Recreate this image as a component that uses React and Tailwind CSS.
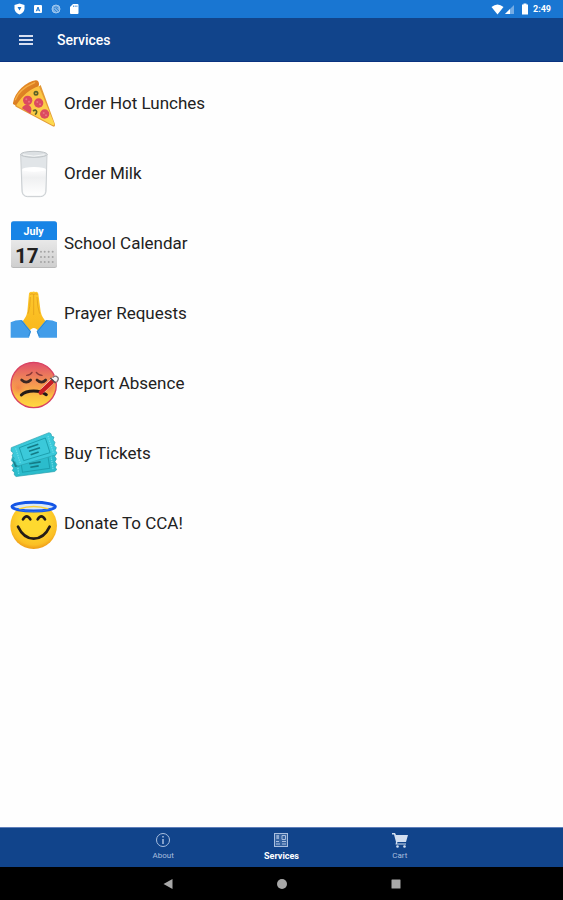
import React, { useState } from "react";

const iconClass = "w-12 h-12 shrink-0 overflow-visible";

function PizzaIcon() {
  return (
    <svg viewBox="30 30 144 144" className={iconClass} aria-hidden="true">
      <defs>
        <linearGradient id="crust" x1="0" y1="0" x2="1" y2="1">
          <stop offset="0" stopColor="#f09a2c" />
          <stop offset="1" stopColor="#c9641a" />
        </linearGradient>
        <linearGradient id="cheese" x1="0" y1="0" x2="1" y2="1">
          <stop offset="0" stopColor="#fbb73a" />
          <stop offset="1" stopColor="#fddc50" />
        </linearGradient>
      </defs>
      <path d="M46 103 Q43 109 49 111 L158 169 Q166 173 165 163 L122 45 Z" fill="#e49a35" />
      <path d="M50 98 Q77 56 115 45 L163 161 Q164 168 157 165 L50 107 Z" fill="url(#cheese)" />
      <path d="M39 99 Q43 74 64 54 Q88 33 107 31 Q118 31 117 45 Q115 51 107 52 Q76 66 55 96 Q50 107 43 104 Q37 103 39 99 Z" fill="url(#crust)" />
      <path d="M46 89 Q58 57 104 38" fill="none" stroke="#f6ae45" strokeWidth="4" strokeLinecap="round" />
      <g fill="#dc4a5f">
        <circle cx="83" cy="91" r="14" />
        <circle cx="116" cy="99" r="14" />
        <circle cx="134" cy="132" r="14" />
        <path d="M66 115 A14 14 0 0 1 94 122 Q93 128 91 131 Z" />
      </g>
      <g fill="#e87582">
        <circle cx="79" cy="88" r="3" />
        <circle cx="87" cy="95" r="3" />
        <circle cx="112" cy="96" r="3" />
        <circle cx="120" cy="103" r="3" />
        <circle cx="131" cy="129" r="3" />
        <circle cx="138" cy="136" r="3" />
      </g>
      <g fill="none" stroke="#596127" strokeWidth="5">
        <circle cx="108" cy="70" r="5" />
        <path d="M99 123 Q108 117 110 125 Q110 130 105 134" />
      </g>
    </svg>
  );
}

function MilkIcon() {
  return (
    <svg viewBox="30 30 144 144" className={iconClass} aria-hidden="true">
      <defs>
        <linearGradient id="milk" x1="0" y1="0" x2="0" y2="1">
          <stop offset="0" stopColor="#ffffff" />
          <stop offset="0.35" stopColor="#eff0f1" />
          <stop offset="1" stopColor="#ffffff" />
        </linearGradient>
      </defs>
      <path d="M62 43 L66 155 Q68 169 82 170 H121 Q136 169 138 155 L141 43 Z" fill="#e1e5e8" stroke="#cbcfd2" strokeWidth="3" />
      <path d="M66 89 Q101 78 138 89 L135 155 Q133 166 121 167 H82 Q71 166 69 155 Z" fill="url(#milk)" />
      <ellipse cx="102" cy="88" rx="36" ry="7" fill="#fff" />
      <ellipse cx="102" cy="43" rx="40" ry="9" fill="#dce0e3" stroke="#bec3c6" strokeWidth="3" />
      <path d="M69 44 Q101 53 134 44" fill="none" stroke="#f5f7f7" strokeWidth="3" />
    </svg>
  );
}

function CalendarIcon() {
  return (
    <svg viewBox="30 30 144 144" className={iconClass} aria-hidden="true">
      <defs>
        <linearGradient id="paper" x1="0" y1="0" x2="0" y2="1">
          <stop offset="0" stopColor="#fafafa" />
          <stop offset="1" stopColor="#cfcfcf" />
        </linearGradient>
      </defs>
      <rect x="33" y="34" width="138" height="140" rx="7" fill="#b9b9b9" />
      <rect x="33" y="34" width="138" height="137" rx="7" fill="url(#paper)" />
      <path d="M33 90 V42 Q33 34 41 34 H163 Q171 34 171 42 V90 Z" fill="#1784e6" />
      <text x="101" y="75" textAnchor="middle" fontFamily="Roboto, sans-serif" fontSize="32" fontWeight="700" fill="#fff">July</text>
      <text x="45" y="159" fontFamily="Roboto, sans-serif" fontSize="62" fontWeight="700" fill="#202020">17</text>
      <g fill="#a4a4a4">
        {[125, 141, 156].map((y) =>
          [123, 134, 146, 158].map((x) => <circle key={`${x}-${y}`} cx={x} cy={y} r="3" />)
        )}
      </g>
    </svg>
  );
}

function PrayIcon() {
  return (
    <svg viewBox="30 30 144 144" className={iconClass} aria-hidden="true">
      <defs>
        <linearGradient id="hands" x1="0" y1="0" x2="0" y2="1">
          <stop offset="0" stopColor="#fdc72d" />
          <stop offset="1" stopColor="#f9b81b" />
        </linearGradient>
      </defs>
      <path d="M66 125 Q79 112 82 95 L87 40 Q90 34 96 36 Q101 33 106 36 Q113 34 115 41 L122 95 Q126 113 139 125 L121 157 L108 146 Q101 141 94 147 L81 157 Z" fill="url(#hands)" />
      <path d="M101 42 V105 M91 51 Q91 82 84 101 M111 51 Q112 82 119 101" fill="none" stroke="#e8a61c" strokeWidth="3" />
      <path d="M90 43 Q96 40 101 43 Q107 40 113 43" fill="none" stroke="#e8a21a" strokeWidth="3" />
      <path d="M32 127 Q48 119 66 120 L93 154 L87 173 H32 Z M171 127 Q156 119 138 120 L110 154 L117 173 H171 Z" fill="#429de9" />
      <path d="M65 123 L91 155 L86 168 M139 123 L112 155 L118 168" fill="none" stroke="#2e87d0" strokeWidth="3" />
    </svg>
  );
}

function SickIcon() {
  return (
    <svg viewBox="30 30 144 144" className={iconClass} aria-hidden="true">
      <defs>
        <linearGradient id="fever" x1="0" y1="0" x2="0" y2="1">
          <stop offset="0" stopColor="#e04e6b" />
          <stop offset="0.5" stopColor="#f59a50" />
          <stop offset="0.75" stopColor="#fcc040" />
          <stop offset="1" stopColor="#ffda40" />
        </linearGradient>
        <radialGradient id="cheek">
          <stop offset="0" stopColor="#ef5b4c" stopOpacity="0.5" />
          <stop offset="1" stopColor="#f5834a" stopOpacity="0" />
        </radialGradient>
      </defs>
      <circle cx="101" cy="105" r="68" fill="url(#fever)" stroke="#d94162" strokeWidth="4" />
      <circle cx="55" cy="114" r="23" fill="url(#cheek)" />
      <circle cx="147" cy="114" r="23" fill="url(#cheek)" />
      <g fill="none" stroke="#3c2822" strokeLinecap="round">
        <path d="M80 76 Q92 75 96 67 M109 67 Q114 75 126 76" stroke="#8b3a37" strokeWidth="4" />
        <path d="M65 90 Q79 103 92 90 M111 90 Q125 103 137 90" strokeWidth="8" />
        <path d="M64 135 Q76 123 101 123 Q124 123 139 134" stroke="#241a17" strokeWidth="9" />
      </g>
      <path d="M130 120 L167 83" stroke="#fff" strokeWidth="15" strokeLinecap="round" />
      <path d="M122 128 L156 95" stroke="#c91e22" strokeWidth="13" strokeLinecap="round" />
      <path d="M151 84 L167 99" stroke="#574e51" strokeWidth="5" />
      <path d="M158 83 Q166 74 173 82 Q178 87 170 96" fill="#f4f4f4" stroke="#796d72" strokeWidth="4" />
    </svg>
  );
}

function Ticket({ fill }) {
  return (
    <g>
      <path
        d="M34 83 L147 38 L153 41 L155 49 L162 51 L159 60 L165 67 L162 76 L169 83 L166 92 L171 99 L166 105 L54 138 L48 134 L47 126 L40 122 L43 114 L36 108 L40 99 L33 93 Z"
        fill={fill}
        stroke="#27a0ae"
        strokeWidth="2"
      />
      <path d="M58 83 L136 54 L150 98 L71 122 Z" fill="none" stroke="#1c9fae" strokeWidth="3" />
      <path d="M47 85 L61 130 M144 48 L160 99" stroke="#69dce8" strokeWidth="4" strokeDasharray="4 3" />
      <path d="M82 84 L115 73 M87 94 L120 83 M92 104 L116 96" stroke="#147b86" strokeWidth="5" />
    </g>
  );
}

function TicketsIcon() {
  return (
    <svg viewBox="30 30 144 144" className={iconClass} aria-hidden="true">
      <g transform="rotate(9 101 105) translate(5 39)">
        <Ticket fill="#2bbccc" />
      </g>
      <path d="M36 116 L49 133 L60 139 L45 141 Z" fill="#187e8a" />
      <Ticket fill="#3bc9da" />
    </svg>
  );
}

function AngelIcon() {
  return (
    <svg viewBox="30 30 144 144" className={iconClass} aria-hidden="true">
      <defs>
        <radialGradient id="face" cx="0.5" cy="0.4" r="0.6">
          <stop offset="0.45" stopColor="#fed92f" />
          <stop offset="0.85" stopColor="#fbbf25" />
          <stop offset="1" stopColor="#ee9b18" />
        </radialGradient>
      </defs>
      <circle cx="101" cy="107" r="70" fill="url(#face)" />
      <ellipse cx="101" cy="50" rx="65" ry="13" fill="#d9e8f8" stroke="#1455e5" strokeWidth="9" />
      <path d="M57 57 Q101 42 145 57" fill="none" stroke="#fbd038" strokeWidth="5" />
      <path d="M47 56 Q101 73 155 56" fill="none" stroke="#2b72f2" strokeWidth="3" />
      <g fill="none" stroke="#241d16" strokeWidth="8" strokeLinecap="round">
        <path d="M69 88 Q80 70 91 88 M113 88 Q124 70 135 88" />
        <path d="M54 110 Q71 146 101 146 Q132 146 149 110" />
      </g>
    </svg>
  );
}

const services = [
  { title: "Order Hot Lunches", Icon: PizzaIcon },
  { title: "Order Milk", Icon: MilkIcon },
  { title: "School Calendar", Icon: CalendarIcon },
  { title: "Prayer Requests", Icon: PrayIcon },
  { title: "Report Absence", Icon: SickIcon },
  { title: "Buy Tickets", Icon: TicketsIcon },
  { title: "Donate To CCA!", Icon: AngelIcon },
];

function InfoIcon() {
  return (
    <svg viewBox="0 0 16 16" className="w-4 h-4" fill="none" stroke="currentColor" aria-hidden="true">
      <circle cx="8" cy="8" r="6.5" />
      <path d="M8 7 V12 M8 4 V5.5" strokeWidth="1.5" />
    </svg>
  );
}

function NewsIcon() {
  return (
    <svg viewBox="0 0 16 16" className="w-4 h-4" fill="none" stroke="currentColor" aria-hidden="true">
      <rect x="1.5" y="1.5" width="13" height="13" fill="currentColor" fillOpacity="0.25" />
      <path d="M3 4 H6 M3 6 H6 M3 9.5 H6 M3 12 H7 M5 3 V7" />
      <path d="M9 3.5 H12.5 V7.5 H9 Z M9 9.5 H13 M9 12 H13" />
    </svg>
  );
}

function CartIcon() {
  return (
    <svg viewBox="0 0 16 16" className="w-4 h-4" fill="currentColor" aria-hidden="true">
      <path d="M0 1 H3 L4 3 H16 L14 10 H5.5 L5 11.5 H14 V12.5 H3.5 L4 10 L2 2.5 H0 Z" />
      <circle cx="5.5" cy="14.5" r="1.3" />
      <circle cx="12.5" cy="14.5" r="1.3" />
    </svg>
  );
}

const tabs = [
  { label: "About", Icon: InfoIcon },
  { label: "Services", Icon: NewsIcon },
  { label: "Cart", Icon: CartIcon },
];

function StatusBar() {
  return (
    <div className="flex h-[18px] items-center justify-between bg-[#1976d2] pl-3.5 pr-3 text-white">
      <div className="flex items-center gap-2">
        <svg viewBox="0 0 11 12" className="h-3 w-[11px]" aria-hidden="true">
          <path d="M5.5 0.5 L10.5 2 V6 Q10 9.5 5.5 11.5 Q1 9.5 0.5 6 V2 Z" fill="currentColor" />
          <path d="M3.5 4 H7.5 L5.5 7.5 Z" fill="#1976d2" />
        </svg>
        <svg viewBox="0 0 10 10" className="h-2.5 w-2.5" aria-hidden="true">
          <rect x="1" y="1" width="8" height="8" rx="1" fill="currentColor" />
          <path d="M3.3 7.3 L5 3 L6.7 7.3 M4 6 H6" fill="none" stroke="#1976d2" />
        </svg>
        <svg viewBox="0 0 10 10" className="h-2.5 w-2.5" aria-hidden="true">
          <circle cx="5" cy="5" r="4" fill="#79b1e8" stroke="#a3c9ee" />
          <path d="M3 4 Q5 1.5 7 4 M3 5 L6 8 M5 4 L8 7" fill="none" stroke="#3b87d2" />
        </svg>
        <svg viewBox="0 0 10 12" className="h-3 w-2.5" aria-hidden="true">
          <path d="M4 1 H8.5 Q9.5 1 9.5 2 V10 Q9.5 11 8.5 11 H2 Q1 11 1 10 V4 Z" fill="currentColor" />
          <path d="M4.5 2.5 V4 M6.2 2.5 V4 M7.9 2.5 V4" stroke="#1976d2" strokeWidth="0.7" />
        </svg>
      </div>
      <div className="flex items-center gap-1">
        <svg viewBox="0 0 13 11" className="h-[11px] w-[13px]" aria-hidden="true">
          <path d="M0.5 3 Q6.5 -2 12.5 3 L6.5 10.5 Z" fill="currentColor" />
        </svg>
        <svg viewBox="0 0 11 11" className="-ml-1 h-[11px] w-[11px]" aria-hidden="true">
          <path d="M10 1 V10 H1 Z" fill="currentColor" fillOpacity="0.4" />
          <path d="M6 5 V10 H1 Z" fill="currentColor" />
        </svg>
        <svg viewBox="0 0 8 12" className="ml-0.5 h-3 w-2" aria-hidden="true">
          <path d="M2.5 0.5 H5.5 V1.5 H7 V11.5 H1 V1.5 H2.5 Z" fill="currentColor" />
        </svg>
        <span className="text-[9px] leading-3 font-bold">2:49</span>
      </div>
    </div>
  );
}

function SystemNav() {
  return (
    <div className="h-[33px] bg-black text-[#a8a8a8]">
      <div className="mx-auto flex h-full max-w-[342px] items-center">
        <button aria-label="Back" className="flex flex-1 justify-center">
          <svg viewBox="0 0 10 10" className="h-2.5 w-2.5" fill="currentColor"><path d="M0.5 5 L9.5 0 V10 Z" /></svg>
        </button>
        <button aria-label="Home" className="flex flex-1 justify-center">
          <svg viewBox="0 0 10 10" className="h-2.5 w-2.5" fill="currentColor"><circle cx="5" cy="5" r="5" /></svg>
        </button>
        <button aria-label="Recent apps" className="flex flex-1 justify-center">
          <svg viewBox="0 0 10 10" className="h-2.5 w-2.5" fill="currentColor"><rect x="0.5" y="0.5" width="9" height="9" rx="0.5" /></svg>
        </button>
      </div>
    </div>
  );
}

export default function App() {
  const [active, setActive] = useState("Services");

  return (
    <div className="flex min-h-screen flex-col bg-[#fefefe] font-[Roboto,sans-serif]">
      <StatusBar />
      <header className="flex h-11 items-center gap-6 border-b border-[#0a3280] bg-[#11448b] pl-[19px] text-white">
        <button aria-label="Open menu">
          <svg viewBox="0 0 14 12" className="h-3 w-3.5" aria-hidden="true">
            <path d="M0 2 H14 M0 6 H14 M0 10 H14" stroke="#d7dff0" strokeWidth="2" />
          </svg>
        </button>
        <h1 className="text-sm font-medium">Services</h1>
      </header>

      <main className="flex-1 pt-[7px]">
        <ul>
          {services.map(({ title, Icon }) => (
            <li key={title}>
              <button className="flex h-[70px] w-full items-center gap-1.5 px-2.5 text-left text-[17px] text-[#222]">
                <Icon />
                {title}
              </button>
            </li>
          ))}
        </ul>
      </main>

      <nav className="h-10 border-t border-[#5f7fba] bg-[#11448b]">
        <div className="mx-auto flex h-full max-w-[355px]">
          {tabs.map(({ label, Icon }) => (
            <button
              key={label}
              onClick={() => setActive(label)}
              className={`flex flex-1 flex-col items-center justify-center ${
                active === label ? "font-bold text-white" : "text-[#a9bfdf]"
              }`}
            >
              <span className={label === "Cart" ? "text-[#d3dff0]" : "text-[#a9bfdf]"}>
                <Icon />
              </span>
              <span className={active === label ? "text-[9px] leading-4" : "text-[8px] leading-4"}>{label}</span>
            </button>
          ))}
        </div>
      </nav>
      <SystemNav />
    </div>
  );
}
